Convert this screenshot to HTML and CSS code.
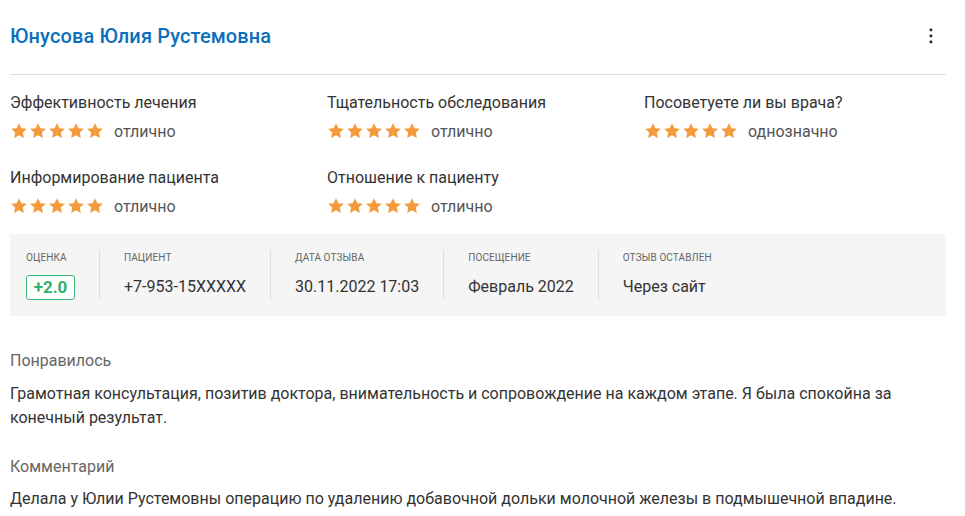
FILE: index.html
```html
<!DOCTYPE html>
<html lang="ru">
<head>
<meta charset="utf-8">
<link rel="stylesheet" href="styles.css">
</head>
<body>
<svg width="0" height="0" class="defs">
  <defs>
    <symbol id="star" viewBox="0 0 24 24">
      <polygon points="12,1.5 15.2,8.2 22.5,9.1 17.1,14.1 18.5,21.4 12,17.8 5.5,21.4 6.9,14.1 1.5,9.1 8.8,8.2" fill="#f39a3d"/>
    </symbol>
  </defs>
</svg>
<div class="card">
  <div class="header">
    <h1 class="name">Юнусова Юлия Рустемовна</h1>
    <svg class="kebab" width="4" height="16" viewBox="0 0 4 16"><rect x="0.6" y="0.6" width="2.6" height="2.6" fill="#222"/><rect x="0.6" y="6.6" width="2.6" height="2.6" fill="#222"/><rect x="0.6" y="12.6" width="2.6" height="2.6" fill="#222"/></svg>
  </div>

  <div class="ratings">
    <div class="rating">
      <div class="rating-label">Эффективность лечения</div>
      <div class="rating-row">
        <span class="stars"><svg><use href="#star"/></svg><svg><use href="#star"/></svg><svg><use href="#star"/></svg><svg><use href="#star"/></svg><svg><use href="#star"/></svg></span>
        <span class="rating-value">отлично</span>
      </div>
    </div>
    <div class="rating">
      <div class="rating-label">Тщательность обследования</div>
      <div class="rating-row">
        <span class="stars"><svg><use href="#star"/></svg><svg><use href="#star"/></svg><svg><use href="#star"/></svg><svg><use href="#star"/></svg><svg><use href="#star"/></svg></span>
        <span class="rating-value">отлично</span>
      </div>
    </div>
    <div class="rating">
      <div class="rating-label">Посоветуете ли вы врача?</div>
      <div class="rating-row">
        <span class="stars"><svg><use href="#star"/></svg><svg><use href="#star"/></svg><svg><use href="#star"/></svg><svg><use href="#star"/></svg><svg><use href="#star"/></svg></span>
        <span class="rating-value">однозначно</span>
      </div>
    </div>
    <div class="rating">
      <div class="rating-label">Информирование пациента</div>
      <div class="rating-row">
        <span class="stars"><svg><use href="#star"/></svg><svg><use href="#star"/></svg><svg><use href="#star"/></svg><svg><use href="#star"/></svg><svg><use href="#star"/></svg></span>
        <span class="rating-value">отлично</span>
      </div>
    </div>
    <div class="rating">
      <div class="rating-label">Отношение к пациенту</div>
      <div class="rating-row">
        <span class="stars"><svg><use href="#star"/></svg><svg><use href="#star"/></svg><svg><use href="#star"/></svg><svg><use href="#star"/></svg><svg><use href="#star"/></svg></span>
        <span class="rating-value">отлично</span>
      </div>
    </div>
  </div>

  <div class="info">
    <div class="info-item first">
      <div class="info-label">Оценка</div>
      <div class="info-value"><span class="badge">+2.0</span></div>
    </div>
    <div class="info-item">
      <div class="info-label">Пациент</div>
      <div class="info-value">+7-953-15XXXXX</div>
    </div>
    <div class="info-item">
      <div class="info-label">Дата отзыва</div>
      <div class="info-value">30.11.2022 17:03</div>
    </div>
    <div class="info-item">
      <div class="info-label">Посещение</div>
      <div class="info-value">Февраль 2022</div>
    </div>
    <div class="info-item">
      <div class="info-label">Отзыв оставлен</div>
      <div class="info-value">Через сайт</div>
    </div>
  </div>

  <div class="section first-section">
    <div class="section-title">Понравилось</div>
    <p class="section-text">Грамотная консультация, позитив доктора, внимательность и сопровождение на каждом этапе. Я была спокойна за конечный результат.</p>
  </div>
  <div class="section">
    <div class="section-title">Комментарий</div>
    <p class="section-text">Делала у Юлии Рустемовны операцию по удалению добавочной дольки молочной железы в подмышечной впадине.</p>
  </div>
</div>
</body>
</html>
```

FILE: styles.css
```css
* { box-sizing: border-box; }
html, body { margin: 0; padding: 0; background: #fff; }
body {
  font-family: Roboto, "Noto Sans", Arial, sans-serif;
  color: #333;
}
.defs { position: absolute; width: 0; height: 0; overflow: hidden; }
.card {
  width: 936px;
  margin-left: 10px;
}
.header {
  display: flex;
  align-items: center;
  justify-content: space-between;
  padding: 24px 13px 26px 0;
  border-bottom: 1px solid #dcdcdc;
}
.name {
  margin: 0;
  font-size: 20px;
  line-height: 24px;
  font-weight: 500;
  color: #0b6fbe;
  letter-spacing: 0.12px;
}
.kebab { display: block; }

.ratings {
  display: grid;
  grid-template-columns: 317px 317px 302px;
  row-gap: 27px;
  padding-top: 18px;
}
.rating-label {
  font-size: 16px;
  line-height: 20px;
  color: #333;
}
.rating-row {
  display: flex;
  align-items: center;
  margin-top: 8px;
  height: 20px;
}
.stars { display: flex; gap: 1px; }
.stars svg { width: 18px; height: 18px; display: block; }
.rating-value {
  margin-left: 10px;
  font-size: 16px;
  color: #555;
}

.info {
  display: flex;
  margin-top: 18px;
  background: #f5f5f5;
  padding: 16px 16px;
}
.info-item {
  padding: 0 24px;
  border-left: 1px solid #dedede;
  height: 50px;
}
.info-item.first { padding-left: 0; border-left: none; }
.info-label {
  font-size: 10px;
  line-height: 14px;
  text-transform: uppercase;
  color: #666;
  letter-spacing: 0.1px;
  margin-top: 1px;
}
.info-value {
  margin-top: 10px;
  font-size: 16px;
  line-height: 24px;
  color: #333;
  white-space: nowrap;
}
.badge {
  display: inline-block;
  width: 49px;
  height: 25px;
  line-height: 23px;
  text-align: center;
  border: 1px solid #3cb878;
  border-radius: 3px;
  color: #33b06a;
  font-weight: 700;
  font-size: 17px;
  background: #fff;
}

.section { margin-top: 25px; }
.section.first-section { margin-top: 33px; }
.section-title {
  font-size: 16px;
  line-height: 24px;
  color: #666;
}
.section-text {
  margin: 8px 0 0;
  font-size: 16px;
  line-height: 24px;
  color: #333;
}
.first-section .section-text { margin-top: 9px; }
```
